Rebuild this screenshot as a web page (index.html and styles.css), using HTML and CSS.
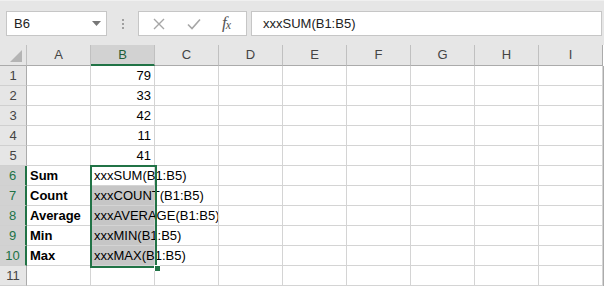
FILE: index.html
```html
<!doctype html>
<html lang="en">
<head>
	<meta charset="UTF-8" />
	<title>Sheet</title>
<link rel="stylesheet" href="styles.css">
</head>
<body>
	<section id="app">
		<div class="bar">
			<div class="namebox">
				<span>B6</span>
				<svg width="9" height="6" viewBox="0 0 9 6"><path d="M0 0h9L4.5 5z" fill="#777"/></svg>
			</div>
			<div class="dots"><i></i><i></i><i></i></div>
			<div class="btns">
				<svg class="ic" width="12" height="12" viewBox="0 0 12 12"><path d="M1 1l10 10M11 1L1 11" stroke="#a6a6a6" stroke-width="1.4" fill="none"/></svg>
				<svg class="ic" width="14" height="12" viewBox="0 0 14 12"><path d="M1 6.5l4 4L13 1.5" stroke="#a6a6a6" stroke-width="1.6" fill="none"/></svg>
				<span class="fx">f<sub>x</sub></span>
			</div>
			<div class="formula">xxxSUM(B1:B5)</div>
		</div>

		<div class="sheet">
			<div class="corner"><b></b></div>
			<div class="ch">A</div>
			<div class="ch sel">B</div>
			<div class="ch">C</div>
			<div class="ch">D</div>
			<div class="ch">E</div>
			<div class="ch">F</div>
			<div class="ch">G</div>
			<div class="ch">H</div>
			<div class="ch">I</div>
		</div>
		<div class="sheet" id="grid"></div>

		<div class="selbox"><b></b></div>
	</section>
<script src="app.js"></script>
</body>
</html>
```

FILE: styles.css
```css
*{
	margin: 0;
	padding: 0;
	box-sizing: border-box;
}
body{
	width: 604px;
	height: 287px;
	overflow: hidden;
	background: #fff;
	font-family: "Liberation Sans", Arial, sans-serif;
}
#app{
	position: relative;
	width: 604px;
	height: 287px;
}
.bar{
	height: 45px;
	background: #e6e6e6;
	border-top: 1px solid #f0f0f0;
	display: flex;
	align-items: flex-start;
	padding: 10px 0 0 6px;
}
.namebox{
	width: 101px;
	height: 25px;
	background: #fff;
	border: 1px solid #c6c6c6;
	display: flex;
	align-items: center;
	justify-content: space-between;
	padding: 0 5px 0 7px;
	font-size: 13px;
	color: #222;
}
.namebox svg{
	margin-top: 1px;
}
.dots{
	width: 31px;
	height: 25px;
	display: flex;
	flex-direction: column;
	align-items: center;
	justify-content: center;
	gap: 2px;
}
.dots i{
	width: 2px;
	height: 2px;
	background: #a0a0a0;
}
.btns{
	width: 109px;
	height: 25px;
	background: #fff;
	border: 1px solid #c6c6c6;
	display: flex;
	align-items: center;
	padding-left: 14px;
}
.btns .ic:first-child{
	margin-right: 22px;
}
.btns .ic:nth-child(2){
	margin-right: 21px;
}
.fx{
	font-family: "Liberation Serif", serif;
	font-style: italic;
	font-size: 17px;
	color: #555;
	line-height: 1;
	margin-top: -2px;
}
.fx sub{
	font-size: 12px;
	vertical-align: -1px;
	margin-left: -1px;
}
.formula{
	width: 351px;
	height: 25px;
	margin-left: 4px;
	background: #fff;
	border: 1px solid #c6c6c6;
	font-size: 13px;
	line-height: 23px;
	padding-left: 11px;
	color: #222;
}
.sheet{
	display: grid;
	grid-template-columns: 27px repeat(9, 64px) 1px;
	width: 604px;
}
.sheet .ch:last-child{
	border-right: 1px solid #ababab;
}
.corner, .ch{
	height: 21px;
	background: #e6e6e6;
	border-right: 1px solid #c0c0c0;
	border-bottom: 1px solid #ababab;
	font-size: 13px;
	color: #444;
	text-align: center;
	line-height: 20px;
}
.corner{
	position: relative;
}
.corner b{
	position: absolute;
	right: 4px;
	bottom: 3px;
	width: 0;
	height: 0;
	border-left: 12px solid transparent;
	border-bottom: 12px solid #b4b4b4;
}
.ch.sel{
	background: #d2d2d2;
	color: #1f5f3a;
	border-bottom: 2px solid #217346;
}
.rh{
	height: 20px;
	background: #e6e6e6;
	border-right: 1px solid #ababab;
	border-bottom: 1px solid #d0d0d0;
	font-size: 13px;
	color: #444;
	text-align: center;
	line-height: 19px;
}
.rh.sel{
	background: #d2d2d2;
	color: #217346;
	border-right: 2px solid #217346;
}
.c{
	height: 20px;
	border-right: 1px solid #d4d4d4;
	border-bottom: 1px solid #d4d4d4;
	font-size: 13px;
	line-height: 20px;
	color: #000;
	white-space: nowrap;
	padding: 0 3px;
}
.c.num{
	text-align: right;
}
.c.lbl{
	font-weight: bold;
}
.c.fill{
	background: #c6c6c6;
}
.edge{
	height: 20px;
	border-left: 1px solid #ababab;
}
.selbox{
	position: absolute;
	left: 90px;
	top: 165px;
	width: 67px;
	height: 103px;
	border: 2px solid #217346;
}
.selbox b{
	position: absolute;
	right: -5px;
	bottom: -5px;
	width: 6px;
	height: 6px;
	background: #217346;
	border: 1px solid #fff;
	border-right: none;
	border-bottom: none;
}
```

FILE: app.js
```js
const rows=[
	['', '79'],
	['', '33'],
	['', '42'],
	['', '11'],
	['', '41'],
	['Sum', 'xxxSUM(B1:B5)'],
	['Count', 'xxxCOUNT(B1:B5)'],
	['Average', 'xxxAVERAGE(B1:B5)'],
	['Min', 'xxxMIN(B1:B5)'],
	['Max', 'xxxMAX(B1:B5)'],
	['', '']
];
const grid=document.getElementById('grid');
let html='';
rows.forEach(function (r,i) {
	const n=i+1,
		sel=n>=6&&n<=10;
	html+='<div class="rh'+(sel?' sel':'')+'">'+n+'</div>';
	html+='<div class="c lbl">'+r[0]+'</div>';
	let cls='c';
	if (n<=5) cls+=' num';
	if (n>=7&&n<=10) cls+=' fill';
	html+='<div class="'+cls+'">'+r[1]+'</div>';
	for (let j=0;j<7;j++) html+='<div class="c"></div>';
	html+='<div class="edge"></div>';
});
grid.innerHTML=html;
```
